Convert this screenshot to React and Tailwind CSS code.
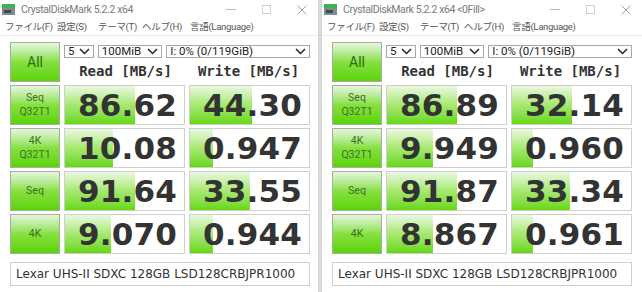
import React from 'react';

const ui = { fontFamily: 'Roboto, "Noto Sans CJK JP", sans-serif' };
const num = { fontFamily: '"DejaVu Sans", Verdana, sans-serif' };
const mono = { fontFamily: '"DejaVu Sans Mono", monospace' };

const left = {
  title: 'CrystalDiskMark 5.2.2 x64',
  rows: [
    { a: 'Seq', b: 'Q32T1', read: '86.62', rp: 59, write: '44.30', wp: 52 },
    { a: '4K', b: 'Q32T1', read: '10.08', rp: 40, write: '0.947', wp: 19 },
    { a: 'Seq', read: '91.64', rp: 59, write: '33.55', wp: 50 },
    { a: '4K', read: '9.070', rp: 39, write: '0.944', wp: 19 },
  ],
};

const right = {
  title: 'CrystalDiskMark 5.2.2 x64 <0Fill>',
  rows: [
    { a: 'Seq', b: 'Q32T1', read: '86.89', rp: 59, write: '32.14', wp: 50 },
    { a: '4K', b: 'Q32T1', read: '9.949', rp: 39, write: '0.960', wp: 18 },
    { a: 'Seq', read: '91.87', rp: 59, write: '33.34', wp: 49 },
    { a: '4K', read: '8.867', rp: 39, write: '0.961', wp: 18 },
  ],
};

const menu = [
  { label: 'ファイル(F)', w: 'w-[52px]' },
  { label: '設定(S)', w: 'w-[41px]' },
  { label: 'テーマ(T)', w: 'w-[44px]' },
  { label: 'ヘルプ(H)', w: 'w-[48px]' },
  { label: '言語(Language)', w: 'w-[70px]' },
];

const Chevron = () => (
  <svg width="11" height="7" viewBox="0 0 11 7" className="shrink-0">
    <path d="M1 1l4.5 4.5L10 1" fill="none" stroke="#222" strokeWidth="1.5" />
  </svg>
);

const Select = ({ w, children }) => (
  <div
    className={`${w} h-[13px] border border-[#a8a8a8] bg-white flex items-center justify-between pl-[3px] pr-[3px] text-[11.5px] leading-none text-[#222] whitespace-nowrap overflow-hidden`}
    style={ui}
  >
    <span>{children}</span>
    <Chevron />
  </div>
);

const GreenButton = ({ children }) => (
  <div className="h-[40px] border border-[#a5b0a0] bg-gradient-to-b from-[#e6f5dc] via-[#86e03c] to-[#5ad400] flex flex-col items-center justify-center text-[#3f6f26] leading-[14px]">
    {children}
  </div>
);

const Cell = ({ value, pct }) => (
  <div className="relative h-[40px] border border-[#cfcfcf] bg-white">
    <div
      className="absolute left-0 top-0 bottom-0 bg-gradient-to-b from-[#eaf8e0] via-[#a6e86e] to-[#66d800]"
      style={{ width: `${pct}%` }}
    />
    <div
      className="relative h-full flex items-center justify-end pr-[7px] text-[31px] font-bold text-[#333] tracking-[0.2px]"
      style={num}
    >
      {value}
    </div>
  </div>
);

const AppIcon = () => (
  <svg width="13" height="11" viewBox="0 0 13 11" className="shrink-0">
    <rect x="0" y="0" width="13" height="4" fill="#3cb44a" />
    <rect x="0" y="4" width="13" height="7" fill="#7d8a93" />
    <rect x="2" y="6" width="7" height="3" fill="#3e4a52" />
  </svg>
);

const Window = ({ data, className }) => (
  <div className={`${className} h-[292px] bg-white flex flex-col overflow-hidden`}>
    {/* title bar */}
    <div className="h-[19px] flex items-center pl-[2px] text-[10.5px] tracking-[-0.4px] text-[#7a7a7a] whitespace-nowrap" style={ui}>
      <AppIcon />
      <span className="ml-[6px]">{data.title}</span>
      <div className="ml-auto flex items-center gap-[26px] pr-[11px]">
        <div className="w-[10px] h-px bg-[#b8b8b8]" />
        <div className="w-[9px] h-[9px] border border-[#d0d0d0]" />
        <svg width="10" height="10" viewBox="0 0 10 10">
          <path d="M0.5 0.5l9 9M9.5 0.5l-9 9" stroke="#a0a0a0" strokeWidth="1" />
        </svg>
      </div>
    </div>
    {/* menu */}
    <div className="h-[17px] flex items-center pl-[5px] text-[9.5px] tracking-[-0.3px] text-[#555] border-b border-[#ececec] whitespace-nowrap" style={ui}>
      {menu.map((m) => (
        <span key={m.label} className={`${m.w} shrink-0`}>{m.label}</span>
      ))}
    </div>
    {/* body */}
    <div className="pt-[6px] pl-[10px]">
      <div className="grid grid-cols-[50px_121px_121px] gap-x-[4px] gap-y-[3px]">
        <GreenButton>
          <span className="text-[14px] text-[#2f6a12]" style={ui}>All</span>
        </GreenButton>
        <div className="col-span-2 flex flex-col">
          <div className="flex gap-[4px] mt-[3px]">
            <Select w="w-[30px]">5</Select>
            <Select w="w-[65px]">100MiB</Select>
            <Select w="w-[145px]">I: 0% (0/119GiB)</Select>
          </div>
          <div className="flex-1 grid grid-cols-2 items-center text-[14px] font-bold text-[#333] pt-[2px]" style={mono}>
            <div className="text-center">Read [MB/s]</div>
            <div className="text-center">Write [MB/s]</div>
          </div>
        </div>
        {data.rows.map((r, i) => (
          <React.Fragment key={i}>
            <GreenButton>
              <span className="text-[10.5px]" style={ui}>{r.a}</span>
              {r.b && <span className="text-[10.5px]" style={ui}>{r.b}</span>}
            </GreenButton>
            <Cell value={r.read} pct={r.rp} />
            <Cell value={r.write} pct={r.wp} />
          </React.Fragment>
        ))}
      </div>
      <div
        className="mt-[8px] w-[300px] h-[24px] border border-[#cfcfcf] bg-white flex items-center pl-[5px] text-[12px] text-[#333] whitespace-nowrap"
        style={num}
      >
        Lexar UHS-II SDXC 128GB LSD128CRBJPR1000
      </div>
    </div>
  </div>
);

export default function App() {
  return (
    <div className="w-[642px] h-[292px] flex bg-[#dcdcdc] overflow-hidden">
      <Window data={left} className="w-[318px]" />
      <div className="w-[4px] bg-[#d8d8d8]" />
      <Window data={right} className="w-[320px]" />
    </div>
  );
}
